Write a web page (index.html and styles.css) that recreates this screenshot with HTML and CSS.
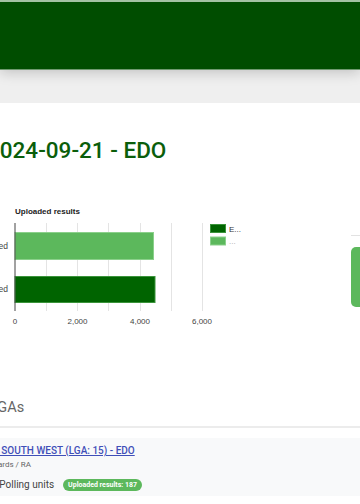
FILE: index.html
```html
<!DOCTYPE html>
<html lang="en">
<head>
    <meta charset="UTF-8">
    <meta name="viewport" content="width=device-width, initial-scale=1.0">
    <title>Election results 2024-09-21 - EDO</title>
    <link rel="stylesheet" href="styles.css">
</head>
<body>
    <header class="topbar"></header>

    <main class="page">
        <section class="card">
            <h2 class="election-title">2024-09-21 - EDO</h2>

            <div class="chart-row">
                <div class="chart">
                    <svg width="365" height="140" viewBox="-14 195 365 140" font-family="Liberation Sans, Arial, sans-serif">
                        <text x="15" y="214" font-size="8" font-weight="bold" fill="#222">Uploaded results</text>
                        <!-- grid -->
                        <g stroke="#e4e4e4" stroke-width="1">
                            <line x1="46.5" y1="223" x2="46.5" y2="311"/>
                            <line x1="77.5" y1="223" x2="77.5" y2="311"/>
                            <line x1="108.5" y1="223" x2="108.5" y2="311"/>
                            <line x1="140.5" y1="223" x2="140.5" y2="311"/>
                            <line x1="171.5" y1="223" x2="171.5" y2="311"/>
                            <line x1="202.5" y1="223" x2="202.5" y2="311"/>
                        </g>
                        <!-- bars -->
                        <rect x="15" y="232.5" width="138.5" height="27" fill="#5cb85c" stroke="#8bd08b" stroke-width="1"/>
                        <rect x="15" y="276.5" width="140" height="26" fill="#006400" stroke="#3b943b" stroke-width="1"/>
                        <line x1="15" y1="223" x2="15" y2="311" stroke="#444" stroke-width="1"/>
                        <!-- labels -->
                        <g font-size="8.5" fill="#444">
                            <text x="8" y="249" text-anchor="end">Not uploaded</text>
                            <text x="8" y="292" text-anchor="end">Uploaded</text>
                        </g>
                        <g font-size="8" fill="#444">
                            <text x="15" y="324" text-anchor="middle">0</text>
                            <text x="77.5" y="324" text-anchor="middle">2,000</text>
                            <text x="140" y="324" text-anchor="middle">4,000</text>
                            <text x="202" y="324" text-anchor="middle">6,000</text>
                        </g>
                        <!-- legend -->
                        <rect x="210.5" y="224.5" width="15" height="8" fill="#006400" stroke="#3b943b"/>
                        <text x="229" y="231.5" font-size="8" fill="#333">E...</text>
                        <rect x="210.5" y="237" width="15" height="8" fill="#5cb85c" stroke="#8bd08b"/>
                        <text x="229" y="243.5" font-size="8" fill="#aaa">...</text>
                    </svg>
                </div>
                <aside class="summary">
                    <div class="summary-rule"></div>
                    <div class="summary-box"></div>
                </aside>
            </div>

            <h3 class="section-title">LGAs</h3>

            <div class="lga-item">
                <a class="lga-link" href="#">OVIA SOUTH WEST (LGA: 15) - EDO</a>
                <div class="lga-meta">10 Wards / RA</div>
                <div class="lga-units">
                    <span>119 Polling units</span>
                    <span class="badge">Uploaded results: 187</span>
                </div>
            </div>
        </section>
    </main>
</body>
</html>
```

FILE: styles.css
```css
body {
    margin: 0;
    background-color: #efefef;
    font-family: Roboto, "Liberation Sans", Arial, sans-serif;
    overflow: hidden;
}

.topbar {
    height: 67px;
    background-color: #004d00;
    border-top: 2px solid #a3c2a3;
    border-bottom: 1px solid #6f9a6f;
    box-shadow: 0 3px 12px rgba(0, 0, 0, 0.18);
}

.page {
    padding-top: 33px;
}

.card {
    background-color: #fff;
    margin-left: -30px;
    padding: 33px 0 40px 16px;
}

.election-title {
    margin: 0 0 0 1px;
    font-size: 22.5px;
    line-height: 28px;
    font-weight: 500;
    color: #0b5e0b;
}

.chart-row {
    display: flex;
    margin-top: 31px;
}

.chart {
    flex-shrink: 0;
    width: 365px;
    height: 140px;
}

.chart svg {
    display: block;
}

.summary {
    flex-shrink: 0;
    width: 60px;
    padding-top: 40px;
}

.summary-rule {
    height: 1px;
    background-color: #e2e2e2;
}

.summary-box {
    margin-top: 11px;
    height: 60px;
    border-radius: 5px;
    background-color: #5cb85c;
}

.section-title {
    margin: 64px 0 0 0;
    padding: 0 0 9px 4px;
    border-bottom: 2px solid #ececec;
    font-size: 14.5px;
    line-height: 18px;
    font-weight: 400;
    color: #666;
}

.lga-item {
    margin-top: 10px;
    margin-left: -16px;
    padding: 6px 0 3px 10px;
    background-color: #f8f9fa;
}

.lga-link {
    display: block;
    margin-left: -4px;
    font-size: 10px;
    line-height: 14px;
    font-weight: 500;
    color: #3f4fb8;
}

.lga-meta {
    margin-top: 1px;
    font-size: 8px;
    line-height: 12px;
    color: #666;
}

.lga-units {
    display: flex;
    align-items: center;
    gap: 9px;
    margin-top: 6px;
    font-size: 10px;
    line-height: 16px;
    color: #444;
}

.badge {
    padding: 0 5px;
    border-radius: 6px;
    background-color: #5cb85c;
    color: #fff;
    font-size: 7px;
    line-height: 12px;
    font-weight: 700;
}
```
